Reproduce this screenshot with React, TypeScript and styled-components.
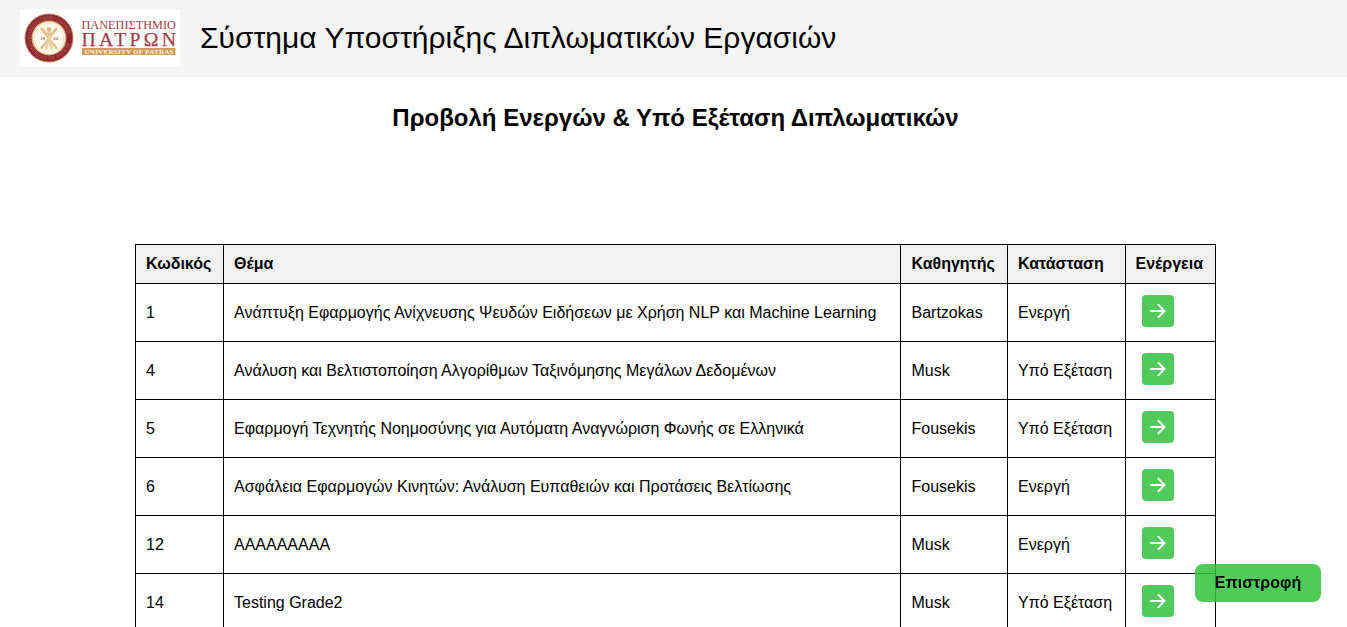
import React from "react";
import styled, { createGlobalStyle } from "styled-components";

const GlobalStyle = createGlobalStyle`
  html, body { margin: 0; height: 100%; overflow: hidden; }
  body {
    background: #fff;
    color: #000;
    font-family: "Liberation Sans", Arial, sans-serif;
    font-size: 16px;
  }
`;

const Page = styled.div`
  height: 627px;
  overflow: hidden;
`;

const Header = styled.header`
  display: flex;
  align-items: center;
  gap: 20px;
  height: 77px;
  padding: 0 20px 1px;
  box-sizing: border-box;
  background: #f4f4f4;
`;

const HeaderTitle = styled.span`
  font-size: 30px;
  line-height: 36px;
  white-space: nowrap;
`;

const PageTitle = styled.h2`
  margin: 27px 0 0 4px;
  text-align: center;
  font-size: 24px;
  line-height: 28px;
  font-weight: bold;
`;

const Table = styled.table`
  width: 1081px;
  margin: 112px 0 0 135px;
  border-collapse: collapse;
  table-layout: fixed;
`;

const HeadCell = styled.th<{ $width: number; $inset: number }>`
  width: ${(p) => p.$width}px;
  height: 39px;
  padding: 0 0 0 ${(p) => p.$inset}px;
  box-sizing: border-box;
  border: 1px solid #000;
  background: #f1f1f1;
  text-align: left;
  white-space: nowrap;
`;

const Cell = styled.td<{ $inset: number }>`
  height: 58px;
  padding: 0 0 0 ${(p) => p.$inset}px;
  box-sizing: border-box;
  border: 1px solid #000;
  white-space: nowrap;
`;

const OpenButton = styled.button`
  display: flex;
  align-items: center;
  justify-content: center;
  width: 32px;
  height: 32px;
  margin: 0 0 3px 6.5px;
  padding: 0;
  border: 0;
  border-radius: 4px;
  background: #50cb5b;
`;

const BackButton = styled.button`
  position: fixed;
  right: 26px;
  bottom: 25px;
  width: 126px;
  height: 38px;
  padding: 0;
  border: 0;
  border-radius: 8px;
  background: rgba(50, 195, 62, 0.86);
  color: #000;
  font: bold 16px "Liberation Sans", Arial, sans-serif;
`;

const Logo = () => (
  <svg width="160" height="58" viewBox="0 0 160 58">
    <rect width="160" height="58" fill="#fff" />
    <circle cx="29" cy="29" r="24" fill="#8f2230" stroke="#b98a55" strokeWidth="1" />
    <defs>
      <path id="sealTop" d="M10.5 29a18.5 18.5 0 0 1 37 0" />
      <path id="sealBottom" d="M7.3 29a21.7 21.7 0 0 0 43.4 0" />
    </defs>
    <g fill="#b87552" fontFamily="Liberation Serif, serif" fontSize="5">
      <text textLength="54"><textPath href="#sealTop">ΠΑΝΕΠΙΣΤΗΜΙΟ ΠΑΤΡΩΝ</textPath></text>
      <text textLength="62"><textPath href="#sealBottom">UNIVERSITY OF PATRAS</textPath></text>
    </g>
    <circle cx="29" cy="29" r="16.8" fill="#fffaf0" stroke="#d9b478" strokeWidth="1.4" />
    <circle cx="29" cy="29" r="14.8" fill="none" stroke="#f0dcb8" strokeWidth="0.7" />
    <g stroke="#e3c08a" fill="none" strokeLinecap="round">
      <path d="M21.5 20 36.5 39M36.5 20 21.5 39" strokeWidth="2.2" />
      <path d="M29 23v9M28 32l-1.5 7M30 32l1.5 7" strokeWidth="3" stroke="#ead0a2" />
      <path d="M22 19l7 7 7-7" strokeWidth="0.8" stroke="#cfa566" />
    </g>
    <circle cx="29" cy="20.5" r="2.3" fill="#deb67b" />
    <g fill="#b5656a" fontFamily="Liberation Serif, serif" fontSize="4.5" fontWeight="bold">
      <text x="20.5" y="30.5">19</text>
      <text x="33.5" y="30.5">64</text>
    </g>
    <g fontFamily="Liberation Serif, serif" fill="#a63e49">
      <text x="61.5" y="20.3" fontSize="11.8" textLength="94.5" lengthAdjust="spacingAndGlyphs">ΠΑΝΕΠΙΣΤΗΜΙΟ</text>
      <text x="61.5" y="36.6" fontSize="19.8" textLength="94.5" stroke="#a63e49" strokeWidth="0.25">ΠΑΤΡΩΝ</text>
    </g>
    <rect x="62" y="39" width="93.5" height="7" fill="#cf9b58" />
    <text x="64.5" y="44.9" fontFamily="Liberation Serif, serif" fontSize="7" fontWeight="bold" fill="#fff5e4" textLength="89">UNIVERSITY OF PATRAS</text>
  </svg>
);

const ArrowIcon = () => (
  <svg width="18" height="18" viewBox="0 0 18 18" fill="none" stroke="#fff" strokeWidth="2">
    <path d="M1 9h14.5M8.9 2.2 15.5 9l-6.6 6.8" />
  </svg>
);

const columns = [
  { label: "Κωδικός", width: 88, inset: 10 },
  { label: "Θέμα", width: 677, inset: 10 },
  { label: "Καθηγητής", width: 107, inset: 10.5 },
  { label: "Κατάσταση", width: 118, inset: 10 },
  { label: "Ενέργεια", width: 90, inset: 9.5 },
];

const rows = [
  ["1", "Ανάπτυξη Εφαρμογής Ανίχνευσης Ψευδών Ειδήσεων με Χρήση NLP και Machine Learning", "Bartzokas", "Ενεργή"],
  ["4", "Ανάλυση και Βελτιστοποίηση Αλγορίθμων Ταξινόμησης Μεγάλων Δεδομένων", "Musk", "Υπό Εξέταση"],
  ["5", "Εφαρμογή Τεχνητής Νοημοσύνης για Αυτόματη Αναγνώριση Φωνής σε Ελληνικά", "Fousekis", "Υπό Εξέταση"],
  ["6", "Ασφάλεια Εφαρμογών Κινητών: Ανάλυση Ευπαθειών και Προτάσεις Βελτίωσης", "Fousekis", "Ενεργή"],
  ["12", "ΑΑΑΑΑΑΑΑΑ", "Musk", "Ενεργή"],
  ["14", "Testing Grade2", "Musk", "Υπό Εξέταση"],
];

export default function App() {
  return (
    <Page>
      <GlobalStyle />
      <Header>
        <Logo />
        <HeaderTitle>Σύστημα Υποστήριξης Διπλωματικών Εργασιών</HeaderTitle>
      </Header>
      <PageTitle>Προβολή Ενεργών &amp; Υπό Εξέταση Διπλωματικών</PageTitle>
      <Table>
        <thead>
          <tr>
            {columns.map((c) => (
              <HeadCell key={c.label} $width={c.width} $inset={c.inset}>{c.label}</HeadCell>
            ))}
          </tr>
        </thead>
        <tbody>
          {rows.map((row) => (
            <tr key={row[0]}>
              {row.map((value, i) => (
                <Cell key={i} $inset={columns[i].inset}>{value}</Cell>
              ))}
              <Cell $inset={columns[4].inset}>
                <OpenButton aria-label="Προβολή"><ArrowIcon /></OpenButton>
              </Cell>
            </tr>
          ))}
        </tbody>
      </Table>
      <BackButton>Επιστροφή</BackButton>
    </Page>
  );
}
